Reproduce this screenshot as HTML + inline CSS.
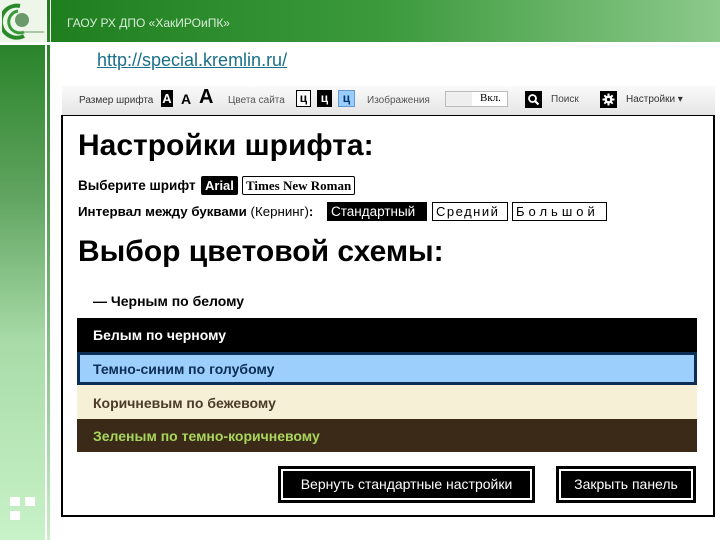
<!DOCTYPE html>
<html><head><meta charset="utf-8"><style>
*{margin:0;padding:0;box-sizing:border-box}
body{width:720px;height:540px;overflow:hidden;background:#fff;position:relative;font-family:"Liberation Sans",sans-serif}
.a{position:absolute}
.t{white-space:nowrap}
</style></head><body>
<div class="a" style="left:0;top:0;width:46px;height:42px;background:#eef6ea"></div>
<svg class="a" style="left:2px;top:2px" width="44" height="38"><path d="M18 4 A16 16 0 1 0 22 34" stroke="#2a8a2a" stroke-width="4" fill="none"/><path d="M16 9 A11 11 0 1 0 22 30" stroke="#3a9a3a" stroke-width="3" fill="none"/><circle cx="20" cy="18" r="7" fill="#6a9a6a"/><path d="M20 30 H42" stroke="#6a9a6a" stroke-width="1"/></svg>
<div class="a" style="left:46px;top:0;width:5px;height:540px;background:#fff"></div>
<div class="a" style="left:47px;top:0;width:3px;height:540px;background:linear-gradient(#1f7a1f,#5aa05a 40%,#c8eec8)"></div>
<div class="a" style="left:51px;top:0;width:669px;height:42px;background:linear-gradient(90deg,#1f7f1f,#3c9a3c 50%,#8cc98c)"></div>
<div class="a t" style="left:67px;top:16px;font-size:12px;color:#d8ecd8">ГАОУ РХ ДПО «ХакИРОиПК»</div>
<div class="a" style="left:0;top:42px;width:51px;height:3px;background:#fff"></div>
<div class="a" style="left:0;top:45px;width:45px;height:495px;background:linear-gradient(#2a842a,#5fa35f 30%,#a8dba8 60%,#c8f2c8)"></div>
<div class="a" style="left:10px;top:497px;width:10px;height:9px;background:#fff"></div>
<div class="a" style="left:25px;top:497px;width:10px;height:9px;background:#fff"></div>
<div class="a" style="left:10px;top:511px;width:10px;height:9px;background:#fff"></div>
<div class="a t" style="left:97px;top:50px;font-size:18px;color:#1a6f8a;text-decoration:underline">http://special.kremlin.ru/</div>
<div class="a" style="left:62px;top:86px;width:653px;height:30px;background:linear-gradient(#fafafa,#e4e4e4)"></div>
<div class="a t" style="left:79px;top:95px;font-size:10px;color:#333">Размер шрифта</div>
<div class="a" style="left:161px;top:90px;width:12px;height:17px;background:#000;color:#fff;font-weight:bold;font-size:13px;text-align:center;line-height:17px">А</div>
<div class="a t" style="left:181px;top:91px;font-size:14px;font-weight:bold">А</div>
<div class="a t" style="left:199px;top:86px;font-size:20px;font-weight:bold">А</div>
<div class="a t" style="left:228px;top:95px;font-size:10px;color:#555">Цвета сайта</div>
<div class="a" style="left:296px;top:90px;width:15px;height:17px;border:1px solid #000;background:#fff;font-weight:bold;font-size:12px;text-align:center;line-height:15px">ц</div>
<div class="a" style="left:317px;top:90px;width:15px;height:17px;background:#000;color:#fff;font-weight:bold;font-size:12px;text-align:center;line-height:17px">ц</div>
<div class="a" style="left:338px;top:90px;width:17px;height:17px;background:#9cf;border:1px solid #69c;color:#036;font-weight:bold;font-size:12px;text-align:center;line-height:15px">ц</div>
<div class="a t" style="left:367px;top:95px;font-size:10px;color:#555">Изображения</div>
<div class="a" style="left:445px;top:91px;width:63px;height:16px;border:1px solid #bbb;background:#fff"></div>
<div class="a" style="left:446px;top:92px;width:26px;height:14px;background:#eee"></div>
<div class="a t" style="left:480px;top:92px;font-size:11px;font-family:'Liberation Serif',serif">Вкл.</div>
<div class="a" style="left:525px;top:91px;width:17px;height:17px;background:#000"></div>
<svg class="a" style="left:525px;top:91px" width="17" height="17"><circle cx="7.5" cy="7.5" r="3.5" stroke="#fff" stroke-width="1.8" fill="none"/><path d="M10 10 L13.5 13.5" stroke="#fff" stroke-width="2.2"/></svg>
<div class="a t" style="left:551px;top:94px;font-size:10px;color:#444">Поиск</div>
<div class="a" style="left:600px;top:91px;width:17px;height:17px;background:#000"></div>
<svg class="a" style="left:600px;top:91px" width="17" height="17"><circle cx="8.5" cy="8.5" r="4" fill="#fff"/><path d="M8.5 2.5V14.5M2.5 8.5H14.5M4.3 4.3L12.7 12.7M12.7 4.3L4.3 12.7" stroke="#fff" stroke-width="2"/><circle cx="8.5" cy="8.5" r="1.6" fill="#000"/></svg>
<div class="a t" style="left:626px;top:94px;font-size:10px;color:#333">Настройки ▾</div>
<div class="a" style="left:61px;top:115px;width:654px;height:402px;border:2px solid #000;border-top:1px solid #000"></div>
<div class="a t" style="left:78px;top:129px;font-size:30px;font-weight:bold">Настройки шрифта:</div>
<div class="a t" style="left:78px;top:178px;font-size:13.5px;font-weight:bold">Выберите шрифт</div>
<div class="a t" style="left:201px;top:176px;height:19px;padding:0 4px;background:#000;color:#fff;font-size:13px;font-weight:bold;line-height:19px;border-radius:2px">Arial</div>
<div class="a t" style="left:242px;top:176px;height:19px;padding:0 3px;border:1px solid #000;font-family:'Liberation Serif',serif;font-size:13px;font-weight:bold;line-height:17px;border-radius:2px">Times New Roman</div>
<div class="a t" style="left:78px;top:204px;font-size:13.3px;font-weight:bold">Интервал между буквами <span style="font-weight:normal">(Кернинг)</span>:</div>
<div class="a t" style="left:327px;top:202px;height:19px;width:100px;padding:0 4px;background:#000;color:#fff;font-size:13.5px;line-height:19px">Стандартный</div>
<div class="a t" style="left:432px;top:202px;height:19px;width:76px;padding:0 3px;border:1px solid #000;font-size:13px;line-height:17px;letter-spacing:1.5px">Средний</div>
<div class="a t" style="left:512px;top:202px;height:19px;width:95px;padding:0 3px;border:1px solid #000;font-size:13px;line-height:17px;letter-spacing:4px">Большой</div>
<div class="a t" style="left:78px;top:235px;font-size:30px;font-weight:bold">Выбор цветовой схемы:</div>
<div class="a t" style="left:93px;top:293px;font-size:14px;font-weight:bold">— Черным по белому</div>
<div class="a" style="left:77px;top:318px;width:620px;height:34px;background:#000"></div>
<div class="a t" style="left:93px;top:327px;font-size:14px;font-weight:bold;color:#fff">Белым по черному</div>
<div class="a" style="left:77px;top:352px;width:620px;height:33px;background:#9ccffb;border:3px solid #0c2d55"></div>
<div class="a t" style="left:93px;top:361px;font-size:14px;font-weight:bold;color:#0c2d55">Темно-синим по голубому</div>
<div class="a" style="left:77px;top:385px;width:620px;height:34px;background:#f6f0d6"></div>
<div class="a t" style="left:93px;top:395px;font-size:14px;font-weight:bold;color:#4a3b2a">Коричневым по бежевому</div>
<div class="a" style="left:77px;top:419px;width:620px;height:33px;background:#3c2a18"></div>
<div class="a t" style="left:93px;top:428px;font-size:14px;font-weight:bold;color:#a8d65a">Зеленым по темно-коричневому</div>
<div class="a" style="left:278px;top:466px;width:257px;height:37px;background:#000;outline:2px solid #fff;outline-offset:-5px"></div>
<div class="a t" style="left:278px;top:476px;width:257px;text-align:center;font-size:14px;color:#fff">Вернуть стандартные настройки</div>
<div class="a" style="left:556px;top:466px;width:140px;height:37px;background:#000;outline:2px solid #fff;outline-offset:-5px"></div>
<div class="a t" style="left:556px;top:476px;width:140px;text-align:center;font-size:14px;color:#fff">Закрыть панель</div>
</body></html>
